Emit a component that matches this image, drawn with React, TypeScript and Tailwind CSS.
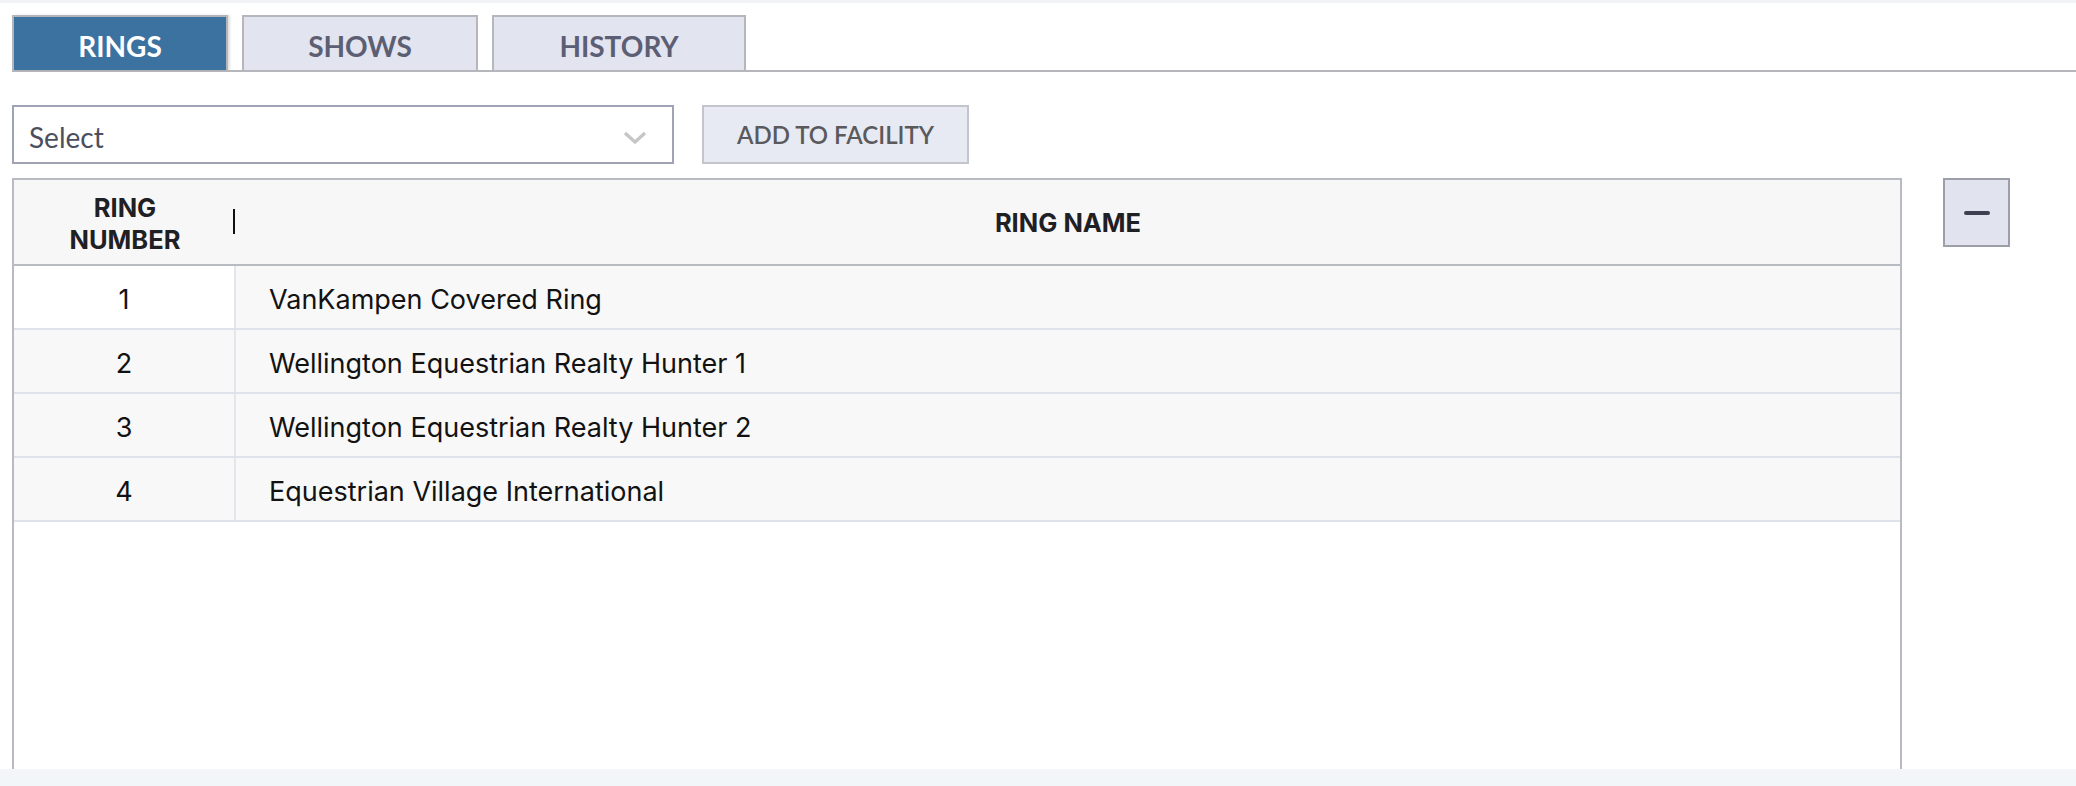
import React from "react";

const rows = [
  { n: 1, name: "VanKampen Covered Ring" },
  { n: 2, name: "Wellington Equestrian Realty Hunter 1" },
  { n: 3, name: "Wellington Equestrian Realty Hunter 2" },
  { n: 4, name: "Equestrian Village International" },
];

export default function App() {
  const lato = { fontFamily: "Lato, 'Open Sans', sans-serif" };
  return (
    <div className="w-[2076px] h-[786px] flex flex-col bg-white overflow-hidden">
      <div className="h-[3px] shrink-0 bg-[#f2f3f7]" />
      <div className="flex-1 min-h-0 flex flex-col pl-[12px] pt-[12px] overflow-hidden">
        {/* Tabs */}
        <div className="flex gap-[14px] border-b-2 border-[#b5b7bd] shrink-0" style={lato}>
          <div className="w-[216px] h-[55px] flex items-center justify-center pt-[4px] bg-[#3c72a0] border-2 border-b-0 border-[#b3b5bb] text-white text-[28px] font-bold shadow-[2px_0_2px_rgba(0,0,0,0.12)]">
            RINGS
          </div>
          <div className="w-[236px] h-[55px] flex items-center justify-center pt-[4px] bg-[#e2e4f0] border-2 border-b-0 border-[#b5b7bd] text-[#5c5f74] text-[28px] font-bold">
            SHOWS
          </div>
          <div className="w-[254px] h-[55px] flex items-center justify-center pt-[4px] bg-[#e2e4f0] border-2 border-b-0 border-[#b5b7bd] text-[#5c5f74] text-[28px] font-bold">
            HISTORY
          </div>
        </div>

        {/* Select + button */}
        <div className="flex gap-[28px] mt-[33px] shrink-0" style={lato}>
          <div className="w-[662px] h-[59px] border-2 border-[#a0a3b5] bg-white flex items-center justify-between pl-[15px] pr-[25px]">
            <span className="text-[28px] text-[#4b4e5e] pt-[5px]">Select</span>
            <svg width="24" height="16" viewBox="0 0 24 16" className="mt-[6px]">
              <polyline points="2,3 12,12 22,3" fill="none" stroke="#c6c6c6" strokeWidth="3.4" />
            </svg>
          </div>
          <div className="w-[267px] h-[59px] border-2 border-[#c3c5cc] bg-[#e8eaf3] flex items-center justify-center text-[24px] font-semibold text-[#5a5a5c]">
            ADD TO FACILITY
          </div>
        </div>

        {/* Table + minus */}
        <div className="flex gap-[41px] mt-[14px] flex-1 min-h-0" style={{ fontFamily: "Inter, Roboto, sans-serif" }}>
          <div className="w-[1890px] h-[620px] shrink-0 border-2 border-[#b8bbc1] flex flex-col">
            <div className="h-[86px] shrink-0 flex bg-[#f7f7f7] border-b-2 border-[#b8bbc1]">
              <div className="w-[222px] shrink-0 relative flex items-center justify-center text-center text-[25.5px] leading-[32px] font-bold text-[#1f2023] pt-[3px]">
                <span>
                  RING
                  <br />
                  NUMBER
                </span>
                <div className="absolute right-[1px] top-[29px] w-[2px] h-[25px] bg-[#111]" />
              </div>
              <div className="flex-1 flex items-center justify-center pt-[2px] text-[25.5px] font-bold text-[#1f2023]">
                RING NAME
              </div>
            </div>
            {rows.map((r, i) => (
              <div key={r.n} className="h-[64px] shrink-0 flex border-b-2 border-[#dfe2ea] text-[27px] text-[#121212]">
                <div className={`w-[222px] shrink-0 flex items-center justify-center pt-[6px] border-r-2 border-[#e3e6ed] ${i === 0 ? "bg-white" : "bg-[#f8f8f8]"}`}>
                  {r.n}
                </div>
                <div className="flex-1 flex items-center pt-[6px] pl-[33px] bg-[#f8f8f8]">{r.name}</div>
              </div>
            ))}
            <div className="flex-1 bg-white" />
          </div>
          <div className="w-[67px] h-[69px] shrink-0 border-2 border-[#9c9ea8] bg-[#e1e3ef] flex items-center justify-center">
            <div className="w-[26px] h-[4px] rounded-full bg-[#3f4152]" />
          </div>
        </div>
      </div>
      <div className="h-[17px] shrink-0 bg-[#f3f6f9]" />
    </div>
  );
}
